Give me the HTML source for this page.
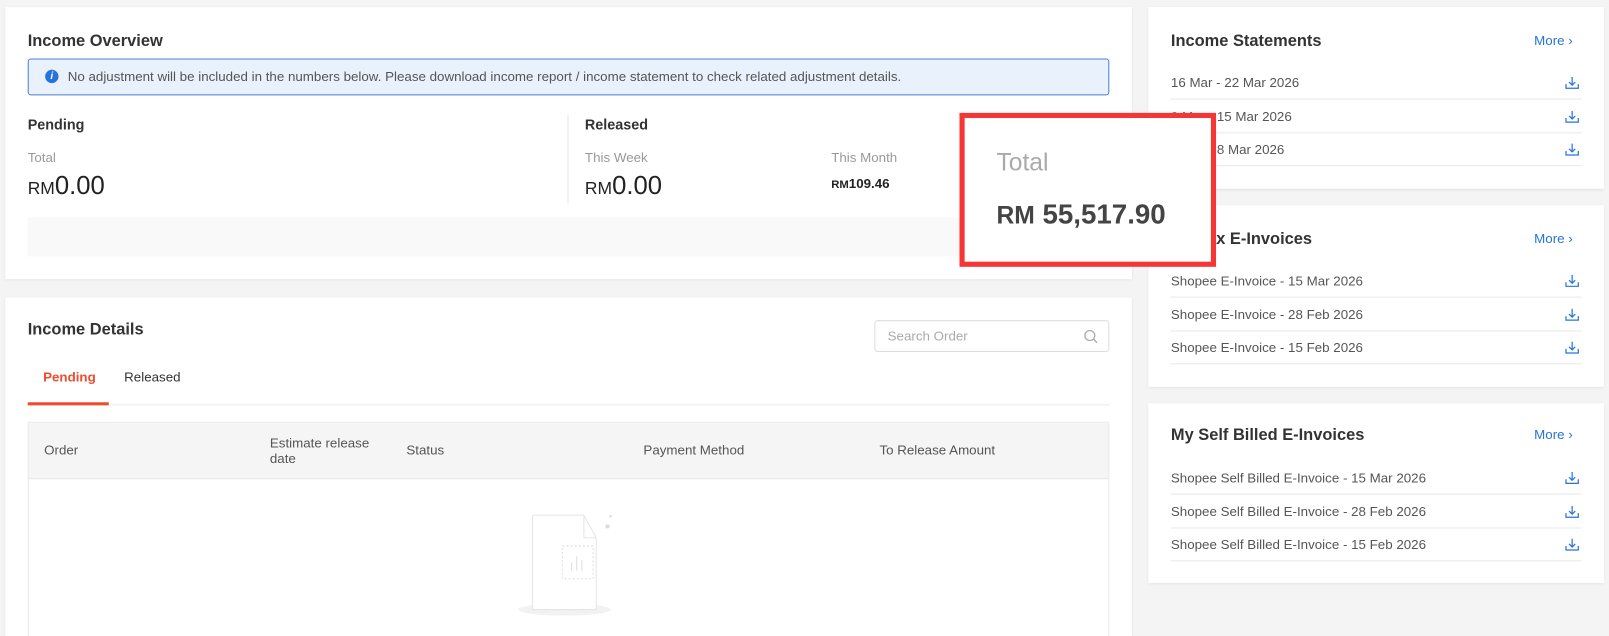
<!DOCTYPE html>
<html><head><style>
*{margin:0;padding:0;box-sizing:border-box}
body{width:1609px;height:614px;background:#f4f4f4;font-family:"Liberation Sans",Arial,sans-serif;color:#333;position:relative;overflow:hidden}
#w{position:absolute;left:0;top:0;width:1568px;height:598px;transform:scale(1.0262);transform-origin:0 0}
.card{position:absolute;background:#fff;box-shadow:0 1px 3px rgba(0,0,0,.08);overflow:hidden}
.a{position:absolute;white-space:nowrap}
.h{font-size:16px;font-weight:bold;color:#333}
.lbl{font-size:13px;color:#999}
.more{font-size:13px;color:#2673dd}
.row{position:absolute;left:22px;right:22px;height:33px;border-bottom:1px solid #e8e8e8;font-size:13px;color:#555;line-height:33px}
.row svg{position:absolute;right:2px;top:10px}
</style></head><body><div id="w">
<div class="card" style="left:5px;top:7px;width:1098px;height:265px">
 <div class="a h" style="left:22px;top:25px">Income Overview</div>
 <div class="a" style="left:22px;top:50px;width:1054px;height:36px;background:#e9f1fc;border:1px solid #4a7fd4;border-radius:3px;font-size:13px;color:#555;line-height:34px;padding-left:38px">
  <span style="position:absolute;left:16px;top:10px;width:13px;height:13px;border-radius:50%;background:#2673dd;color:#fff;font-size:10px;line-height:13px;text-align:center;font-weight:bold;font-style:italic">i</span>No adjustment will be included in the numbers below. Please download income report / income statement to check related adjustment details.</div>
 <div class="a" style="left:22px;top:106px;font-size:14px;font-weight:bold">Pending</div>
 <div class="a lbl" style="left:22px;top:139px">Total</div>
 <div class="a" style="left:22px;top:160px;font-size:25px;color:#222"><span style="font-size:17px">RM</span>0.00</div>
 <div class="a" style="left:548px;top:105px;width:1px;height:86px;background:#e5e5e5"></div>
 <div class="a" style="left:565px;top:106px;font-size:14px;font-weight:bold">Released</div>
 <div class="a lbl" style="left:565px;top:139px">This Week</div>
 <div class="a" style="left:565px;top:160px;font-size:25px;color:#222"><span style="font-size:17px">RM</span>0.00</div>
 <div class="a lbl" style="left:805px;top:139px">This Month</div>
 <div class="a" style="left:805px;top:164px;font-size:13px;font-weight:bold;color:#222"><span style="font-size:11px">RM</span>109.46</div>
 <div class="a" style="left:22px;top:205px;width:1054px;height:38px;background:#f9f9f9"></div>
</div>
<div class="card" style="left:5px;top:290px;width:1098px;height:330px">
 <div class="a h" style="left:22px;top:23px">Income Details</div>
 <div class="a" style="left:847px;top:22px;width:229px;height:31px;border:1px solid #ddd;border-radius:3px;font-size:13px;color:#aaa;line-height:29px;padding-left:12px">Search Order
  <svg style="position:absolute;right:10px;top:8px" width="14" height="14" viewBox="0 0 14 14" fill="none" stroke="#aaa" stroke-width="1.3"><circle cx="6" cy="6" r="4.8"/><path d="M9.5 9.5L13 13"/></svg></div>
 <div class="a" style="left:37px;top:70px;font-size:13px;font-weight:bold;color:#ee4d2d">Pending</div>
 <div class="a" style="left:116px;top:70px;font-size:13px;color:#333">Released</div>
 <div class="a" style="left:22px;top:104px;width:1054px;height:1px;background:#e8e8e8"></div>
 <div class="a" style="left:22px;top:102px;width:79px;height:3px;background:#ee4d2d"></div>
 <div class="a" style="left:22px;top:121px;width:1054px;height:230px;border:1px solid #e8e8e8"></div>
 <div class="a" style="left:23px;top:122px;width:1052px;height:55px;background:#f5f5f5;border-bottom:1px solid #e8e8e8;font-size:13px;color:#555">
  <span class="a" style="left:15px;top:19px">Order</span>
  <span class="a" style="left:235px;top:12px;line-height:15px">Estimate release<br>date</span>
  <span class="a" style="left:368px;top:19px">Status</span>
  <span class="a" style="left:599px;top:19px">Payment Method</span>
  <span class="a" style="left:829px;top:19px">To Release Amount</span>
 </div>
 <svg class="a" style="left:500px;top:210px" width="100" height="100" viewBox="0 0 100 100" fill="none">
  <ellipse cx="45" cy="94" rx="45" ry="6" fill="#f2f2f2"/>
  <path d="M14 2h50l12 22v70H14z" fill="#fff" stroke="#e5e5e5"/>
  <path d="M64 2v22h12" stroke="#e5e5e5"/>
  <rect x="43" y="32" width="30" height="32" stroke="#ddd" stroke-dasharray="2 2"/>
  <path d="M52 56v-8M57 56v-14M62 56v-10" stroke="#ddd"/>
  <circle cx="87" cy="13" r="2" fill="#ddd"/><circle cx="90" cy="3" r="1.3" fill="#ddd"/>
 </svg>
</div>
<div class="card" style="left:1119px;top:7px;width:444px;height:177px">
 <div class="a h" style="left:22px;top:25px">Income Statements</div>
 <div class="a more" style="left:376px;top:25px">More ›</div>
 <div class="row" style="top:57px">16 Mar - 22 Mar 2026<svg width="14" height="13" viewBox="0 0 14 13" fill="none" stroke="#2673dd" stroke-width="1.2"><path d="M1 8v4h12V8M7 1v8M4 6l3 3 3-3"/></svg></div>
 <div class="row" style="top:90px">9 Mar - 15 Mar 2026<svg width="14" height="13" viewBox="0 0 14 13" fill="none" stroke="#2673dd" stroke-width="1.2"><path d="M1 8v4h12V8M7 1v8M4 6l3 3 3-3"/></svg></div>
 <div class="row" style="top:122px">2 Mar - 8 Mar 2026<svg width="14" height="13" viewBox="0 0 14 13" fill="none" stroke="#2673dd" stroke-width="1.2"><path d="M1 8v4h12V8M7 1v8M4 6l3 3 3-3"/></svg></div>
</div>
<div class="card" style="left:1119px;top:200px;width:444px;height:177px">
 <div class="a h" style="left:22px;top:25px">My Tax E-Invoices</div>
 <div class="a more" style="left:376px;top:25px">More ›</div>
 <div class="row" style="top:57px">Shopee E-Invoice - 15 Mar 2026<svg width="14" height="13" viewBox="0 0 14 13" fill="none" stroke="#2673dd" stroke-width="1.2"><path d="M1 8v4h12V8M7 1v8M4 6l3 3 3-3"/></svg></div>
 <div class="row" style="top:90px">Shopee E-Invoice - 28 Feb 2026<svg width="14" height="13" viewBox="0 0 14 13" fill="none" stroke="#2673dd" stroke-width="1.2"><path d="M1 8v4h12V8M7 1v8M4 6l3 3 3-3"/></svg></div>
 <div class="row" style="top:122px">Shopee E-Invoice - 15 Feb 2026<svg width="14" height="13" viewBox="0 0 14 13" fill="none" stroke="#2673dd" stroke-width="1.2"><path d="M1 8v4h12V8M7 1v8M4 6l3 3 3-3"/></svg></div>
</div>
<div class="card" style="left:1119px;top:393px;width:444px;height:175px">
 <div class="a h" style="left:22px;top:23px">My Self Billed E-Invoices</div>
 <div class="a more" style="left:376px;top:23px">More ›</div>
 <div class="row" style="top:56px">Shopee Self Billed E-Invoice - 15 Mar 2026<svg width="14" height="13" viewBox="0 0 14 13" fill="none" stroke="#2673dd" stroke-width="1.2"><path d="M1 8v4h12V8M7 1v8M4 6l3 3 3-3"/></svg></div>
 <div class="row" style="top:89px">Shopee Self Billed E-Invoice - 28 Feb 2026<svg width="14" height="13" viewBox="0 0 14 13" fill="none" stroke="#2673dd" stroke-width="1.2"><path d="M1 8v4h12V8M7 1v8M4 6l3 3 3-3"/></svg></div>
 <div class="row" style="top:121px">Shopee Self Billed E-Invoice - 15 Feb 2026<svg width="14" height="13" viewBox="0 0 14 13" fill="none" stroke="#2673dd" stroke-width="1.2"><path d="M1 8v4h12V8M7 1v8M4 6l3 3 3-3"/></svg></div>
</div>
<div class="a" style="left:935px;top:110px;width:250px;height:150px;background:#fff;border:5px solid #f63535">
 <div class="a" style="left:31px;top:30px;font-size:24px;color:#aaa">Total</div>
 <div class="a" style="left:31px;top:79px;font-size:27px;font-weight:bold;color:#444"><span style="font-size:24px">RM</span> 55,517.90</div>
</div>
</div></body></html>
